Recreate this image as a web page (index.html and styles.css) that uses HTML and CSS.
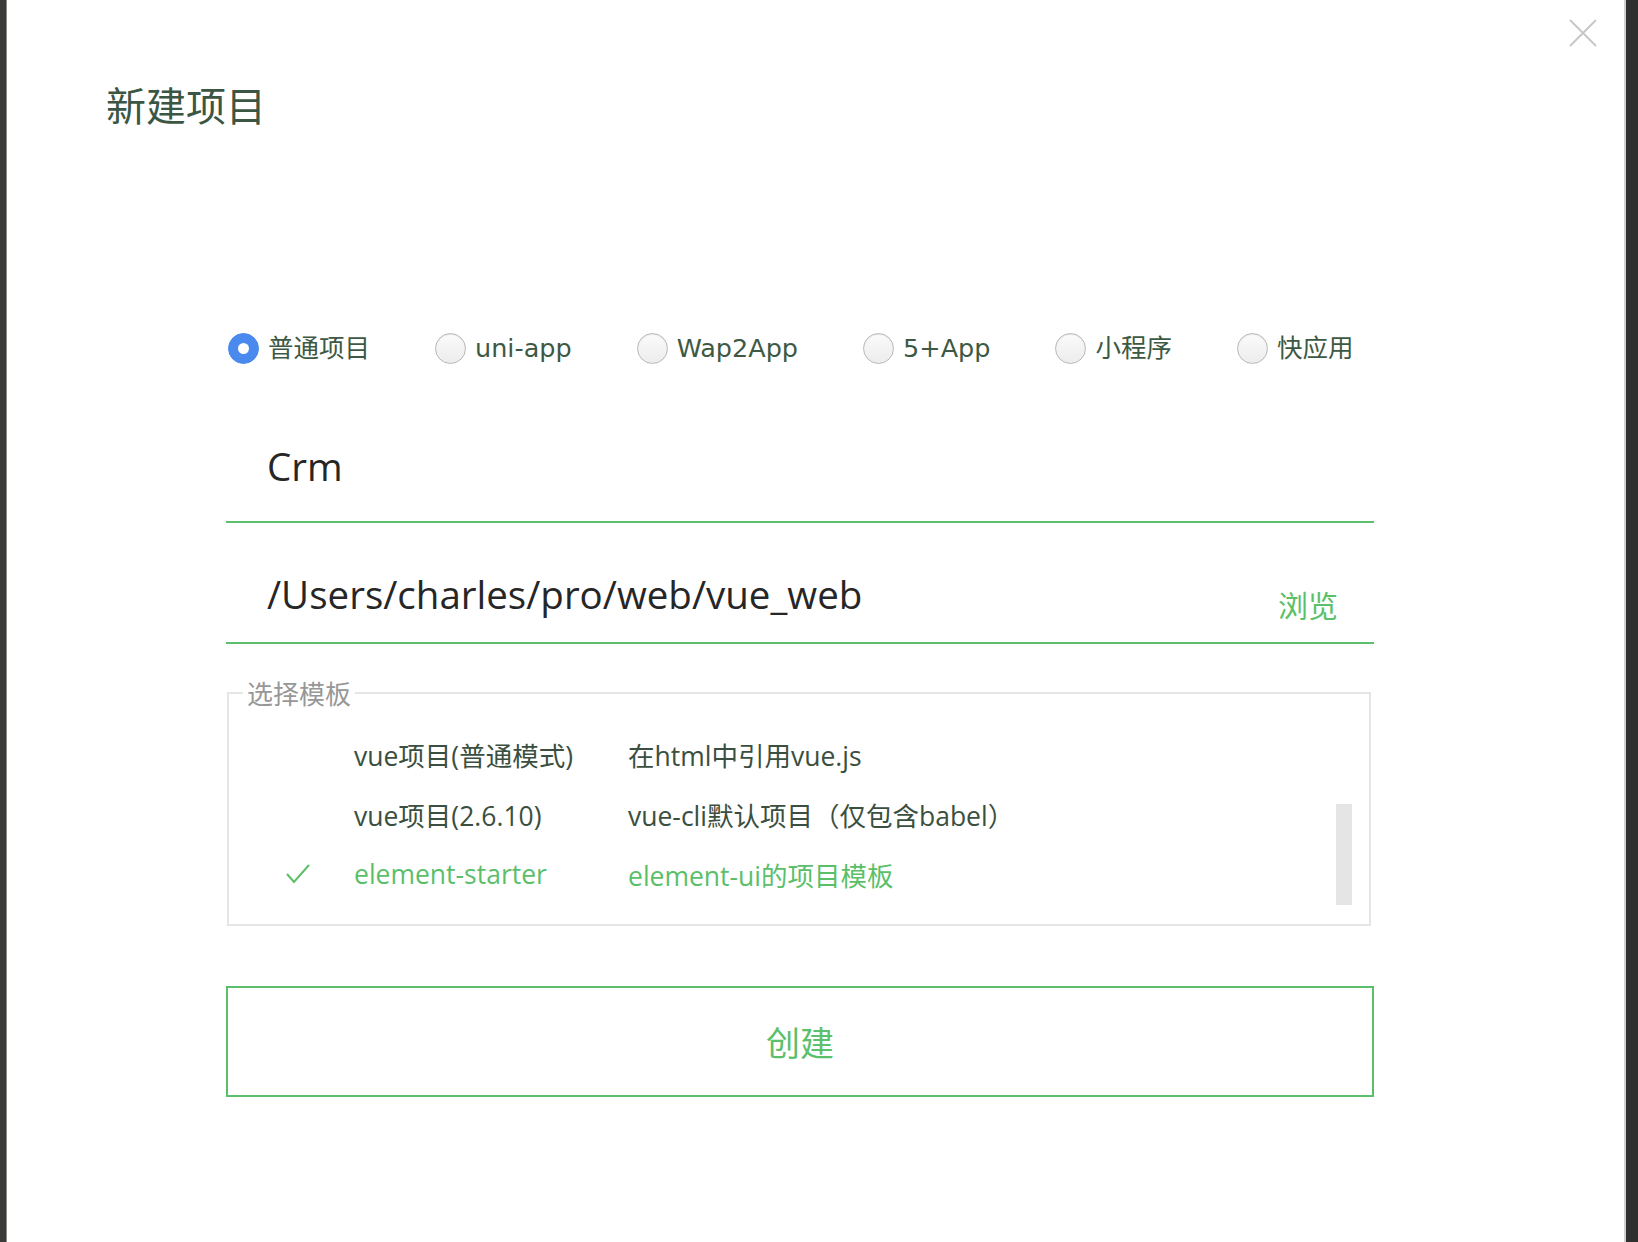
FILE: index.html
```html
<!DOCTYPE html>
<html lang="zh-CN">
<head>
<meta charset="utf-8">
<title>新建项目</title>
<link rel="stylesheet" href="styles.css">
</head>
<body>
<div class="screen">
  <div class="edge edge-left"></div>
  <div class="panel">
    <button class="close" aria-label="关闭">
      <svg width="28" height="28" viewBox="0 0 28 28"><path d="M1 1 L27 27 M27 1 L1 27" stroke="#c6c6c6" stroke-width="1.8" fill="none"/></svg>
    </button>
    <h1 class="title">新建项目</h1>
    <div class="content">
      <div class="radios">
        <label class="radio checked"><span class="dot"></span><span class="rlabel">普通项目</span></label>
        <label class="radio"><span class="dot"></span><span class="rlabel">uni-app</span></label>
        <label class="radio"><span class="dot"></span><span class="rlabel">Wap2App</span></label>
        <label class="radio"><span class="dot"></span><span class="rlabel">5+App</span></label>
        <label class="radio"><span class="dot"></span><span class="rlabel">小程序</span></label>
        <label class="radio"><span class="dot"></span><span class="rlabel">快应用</span></label>
      </div>
      <div class="field field-name"><span class="value">Crm</span></div>
      <div class="field field-path"><span class="value">/Users/charles/pro/web/vue_web</span><span class="browse">浏览</span></div>
      <fieldset class="templates">
        <legend>选择模板</legend>
        <div class="list">
          <div class="row"><span class="check"></span><span class="name">vue项目(普通模式)</span><span class="desc">在html中引用vue.js</span></div>
          <div class="row"><span class="check"></span><span class="name">vue项目(2.6.10)</span><span class="desc">vue-cli默认项目（仅包含babel）</span></div>
          <div class="row selected"><span class="check"><svg width="26" height="22" viewBox="0 0 26 22"><path d="M2 11 L9 19 L24 2" stroke="#5bbf6a" stroke-width="2" fill="none"/></svg></span><span class="name">element-starter</span><span class="desc">element-ui的项目模板</span></div>
          <div class="thumb"></div>
        </div>
      </fieldset>
      <button class="create">创建</button>
    </div>
  </div>
  <div class="edge edge-right"></div>
</div>
</body>
</html>
```

FILE: styles.css
```css
* { box-sizing: border-box; }
html, body { margin: 0; padding: 0; }
body {
  font-family: "Open Sans", "Noto Sans CJK SC", sans-serif;
  background: #fff;
}
.screen {
  display: flex;
  width: 1638px;
  height: 1242px;
  overflow: hidden;
}
.edge-left {
  width: 7px;
  background: #3b3b39;
  border-right: 1px solid #8a8a88;
}
.edge-right {
  width: 14px;
  background: #30302e;
  border-left: 2px solid #d0d0d0;
}
.panel {
  flex: 1;
  position: relative;
  background: #fff;
}
.close {
  position: absolute;
  top: 19px;
  right: 27px;
  padding: 0;
  border: 0;
  background: none;
  width: 28px;
  height: 28px;
}
.close svg { display: block; }
.title {
  margin: 79px 0 0 99px;
  font-family: "Noto Sans CJK SC", sans-serif;
  font-weight: 400;
  font-size: 40px;
  line-height: 50px;
  color: #3b5643;
}
.content {
  margin-left: 219px;
  width: 1148px;
}
.radios {
  margin-top: 190px;
  height: 58px;
  display: flex;
  align-items: center;
  gap: 65px;
  padding-left: 2px;
}
.radio {
  display: flex;
  align-items: center;
  gap: 9px;
  font-family: "DejaVu Sans", "Noto Sans CJK SC", sans-serif;
  font-size: 25.5px;
  line-height: 34px;
  color: #3d5943;
}
.rlabel {
  display: block;
  height: 34px;
  line-height: 34px;
}
.dot {
  width: 31px;
  height: 31px;
  border-radius: 50%;
  border: 1px solid #b9b9b9;
  background: linear-gradient(#fbfbfb, #ececec);
  box-shadow: inset 0 1px 1px rgba(0,0,0,0.08);
  display: flex;
  align-items: center;
  justify-content: center;
}
.radio.checked .dot {
  background: #4a89ee;
  border-color: #4a89ee;
  box-shadow: none;
}
.radio.checked .dot::after {
  content: "";
  width: 11px;
  height: 11px;
  border-radius: 50%;
  background: #fff;
}
.field {
  display: flex;
  align-items: center;
  border-bottom: 2px solid #5cbf6b;
  padding-left: 41px;
  color: #262626;
}
.field-name {
  margin-top: 34px;
  height: 112px;
  font-size: 38.5px;
}
.field-path {
  margin-top: 23px;
  height: 98px;
  font-size: 38.5px;
}
.value { flex: 1; }
.browse {
  font-family: "Noto Sans CJK SC", sans-serif;
  font-size: 30px;
  color: #5cbf6b;
  margin: 20px 36px 0 0;
}
.templates {
  margin: 31px 3px 0 1px;
  padding: 0;
  border: 2px solid #e5e5e5;
  min-inline-size: 0;
}
.templates legend {
  margin-left: 14px;
  padding: 0 4px;
  font-family: "Noto Sans CJK SC", sans-serif;
  font-size: 26px;
  line-height: 36px;
  color: #979797;
}
.list {
  position: relative;
  padding: 13px 0 20px 53px;
}
.row {
  display: grid;
  grid-template-columns: 72px 274px 1fr;
  align-items: center;
  height: 60px;
  font-size: 26.5px;
  color: #3b4f40;
}
.row.selected { color: #5bbf6a; }
.check { display: flex; align-items: center; padding-left: 3px; }
.check svg { display: block; }
.thumb {
  position: absolute;
  right: 17px;
  top: 93px;
  width: 16px;
  height: 101px;
  background: #e5e5e5;
}
.create {
  display: block;
  width: 100%;
  margin-top: 60px;
  height: 111px;
  border: 2px solid #5cbf6b;
  background: #fff;
  font-family: "Noto Sans CJK SC", sans-serif;
  font-size: 34px;
  color: #5cbf6b;
  padding: 0;
}
```
